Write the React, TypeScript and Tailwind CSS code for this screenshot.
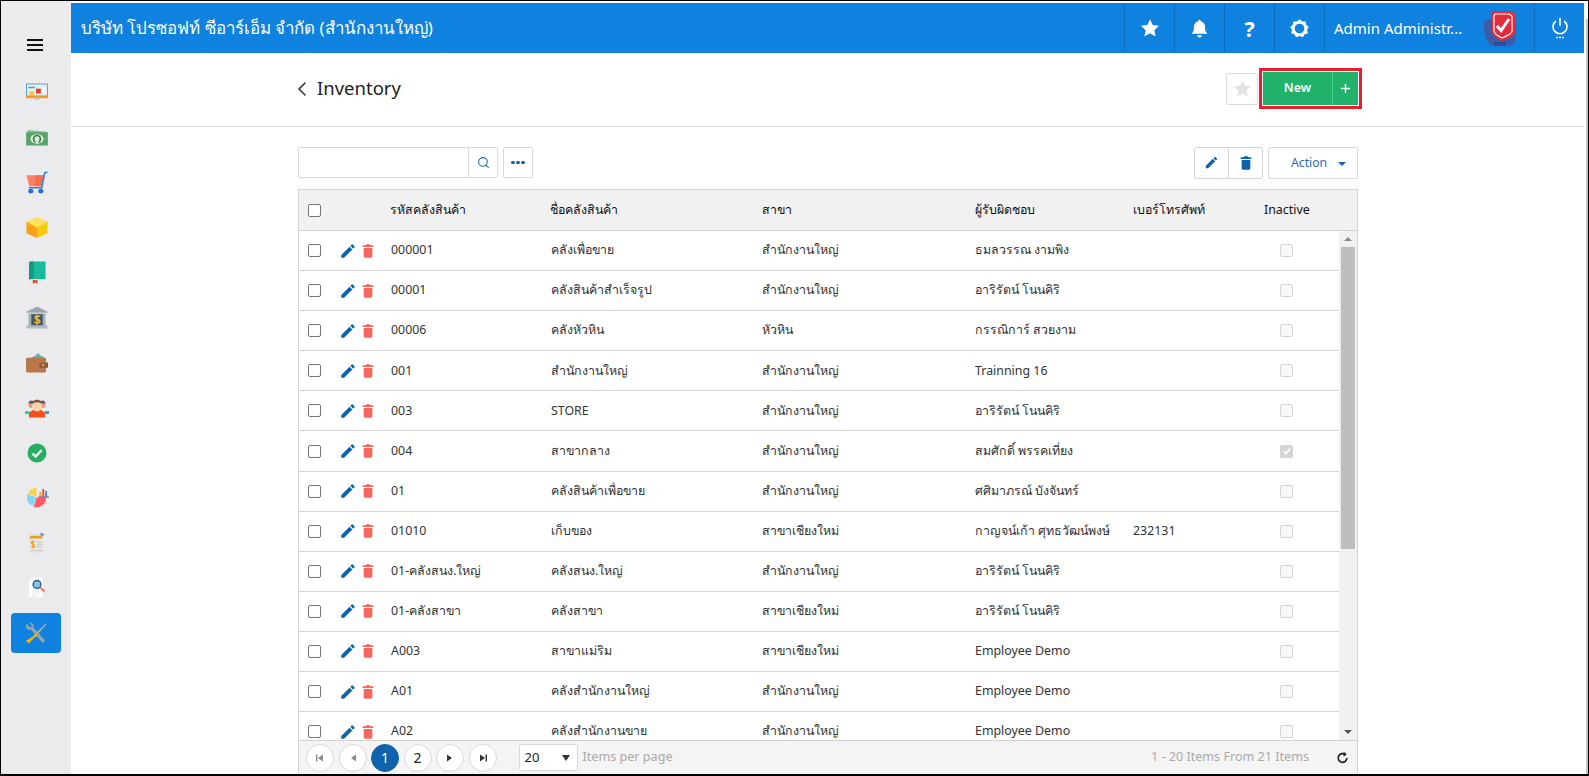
import { ChevronLeft, Search } from "lucide-react";

const FONT = "font-['Noto_Sans','Liberation_Sans',sans-serif]";
const COLS = "grid grid-cols-[42px_50px_160px_211px_213px_158px_131px_1fr] items-center";

type Row = { code: string; name: string; branch: string; owner: string; phone?: string; inactive?: boolean };

const HO = "สำนักงานใหญ่";
const CM = "สาขาเชียงใหม่";
const ARIRAT = "อาริรัตน์ โนนคิริ";

const ROWS: Row[] = [
  { code: "000001", name: "คลังเพื่อขาย", branch: HO, owner: "ธมลวรรณ งามพิง" },
  { code: "00001", name: "คลังสินค้าสำเร็จรูป", branch: HO, owner: ARIRAT },
  { code: "00006", name: "คลังหัวหิน", branch: "หัวหิน", owner: "กรรณิการ์ สวยงาม" },
  { code: "001", name: HO, branch: HO, owner: "Trainning 16" },
  { code: "003", name: "STORE", branch: HO, owner: ARIRAT },
  { code: "004", name: "สาขากลาง", branch: HO, owner: "สมศักดิ์ พรรคเที่ยง", inactive: true },
  { code: "01", name: "คลังสินค้าเพื่อขาย", branch: HO, owner: "ศศิมาภรณ์ บังจันทร์" },
  { code: "01010", name: "เก็บของ", branch: CM, owner: "กาญจน์เก้า ศุทธวัฒน์พงษ์", phone: "232131" },
  { code: "01-คลังสนง.ใหญ่", name: "คลังสนง.ใหญ่", branch: HO, owner: ARIRAT },
  { code: "01-คลังสาขา", name: "คลังสาขา", branch: CM, owner: ARIRAT },
  { code: "A003", name: "สาขาแม่ริม", branch: CM, owner: "Employee Demo" },
  { code: "A01", name: "คลังสำนักงานใหญ่", branch: HO, owner: "Employee Demo" },
  { code: "A02", name: "คลังสำนักงานขาย", branch: HO, owner: "Employee Demo" },
];

function PencilIcon({ className }: { className?: string }) {
  return (
    <svg viewBox="0 0 24 24" fill="currentColor" className={className}>
      <path d="M3 17.25V21h3.75L17.81 9.94l-3.75-3.75L3 17.25zM20.71 7.04a1 1 0 0 0 0-1.41l-2.34-2.34a1 1 0 0 0-1.41 0l-1.83 1.83 3.75 3.75 1.83-1.83z" />
    </svg>
  );
}

function TrashIcon({ className }: { className?: string }) {
  return (
    <svg viewBox="0 0 24 24" fill="currentColor" className={className}>
      <path d="M5.5 7.5h13V20c0 1.1-.9 2-2 2h-9c-1.1 0-2-.9-2-2V7.5zM20 3.5h-4.5l-1-1.5h-5l-1 1.5H4v2.5h16V3.5z" />
    </svg>
  );
}

function StarIcon({ className }: { className?: string }) {
  return (
    <svg viewBox="0 0 24 24" fill="currentColor" className={className}>
      <path d="M12 1.5l3.2 7 7.6.9-5.6 5.2 1.5 7.5L12 18.3l-6.7 3.8 1.5-7.5L1.2 9.4l7.6-.9z" />
    </svg>
  );
}

function CheckBox({ disabled, checked }: { disabled?: boolean; checked?: boolean }) {
  if (disabled) {
    return (
      <span
        className={`flex h-[13px] w-[13px] items-center justify-center rounded-[2px] border border-[#d4d4d4] ${
          checked ? "bg-[#d4d4d4]" : "bg-[#f8f8f8]"
        }`}
      >
        {checked && (
          <svg viewBox="0 0 12 12" className="h-[10px] w-[10px]" fill="none" stroke="#fff" strokeWidth="2">
            <path d="M2 6.5l2.7 2.7L10 3" />
          </svg>
        )}
      </span>
    );
  }
  return <span className="block h-[13px] w-[13px] rounded-[2px] border border-[#767676] bg-white" />;
}

function MonitorIcon() {
  return (
    <svg viewBox="0 0 24 20" className="h-[19px] w-[24px]">
      <rect x="1" y="1" width="22" height="14" fill="#e8eff3" stroke="#5a9bd5" strokeWidth="1" />
      <rect x="0.5" y="13" width="23" height="3" fill="#f59a23" />
      <rect x="9" y="16" width="6" height="1.5" fill="#9fd3e0" />
      <rect x="3" y="4" width="7" height="1.5" fill="#3aa6a6" />
      <rect x="11" y="6" width="5" height="5" fill="#e5392f" />
      <rect x="4" y="9" width="5" height="4" fill="#f5c542" />
      <rect x="17" y="5" width="3" height="5" fill="#ffffff" />
    </svg>
  );
}

function MoneyIcon() {
  return (
    <svg viewBox="0 0 24 18" className="h-[17px] w-[24px]">
      <path d="M2 1l20 2v3H2z" fill="#7cc48b" />
      <rect x="0.5" y="3.5" width="23" height="14" fill="#5aa469" />
      <ellipse cx="12" cy="10.5" rx="7" ry="5" fill="#dcefd9" />
      <circle cx="12" cy="10.5" r="3.6" fill="none" stroke="#3d7a4c" strokeWidth="1.8" />
      <rect x="10.5" y="12.5" width="3" height="3" fill="#dcefd9" />
    </svg>
  );
}

function CartIcon() {
  return (
    <svg viewBox="0 0 24 24" className="h-[23px] w-[24px]">
      <path d="M1 4.5h18L17 16H4z" fill="#ff7f66" />
      <path d="M10 4.5h9L17 16h-7z" fill="#f2704f" />
      <path d="M23 1l-3 1-3 15.5H3.5" fill="none" stroke="#2f7fe0" strokeWidth="1.6" />
      <circle cx="5.5" cy="21" r="2.6" fill="#1f6fd6" />
      <circle cx="16" cy="21" r="2.6" fill="#1f6fd6" />
    </svg>
  );
}

function BoxIcon() {
  return (
    <svg viewBox="0 0 24 24" className="h-[23px] w-[24px]">
      <path d="M12 1l11 5-11 6L1 6z" fill="#ffe44d" />
      <path d="M1 6l11 6v11L1 18z" fill="#f8a116" />
      <path d="M23 6l-11 6v11l11-5z" fill="#f7c911" />
      <path d="M7 3.5l11 5M9 2.7l11 5" stroke="#f3d98a" strokeWidth="1" />
    </svg>
  );
}

function BookIcon() {
  return (
    <svg viewBox="0 0 20 24" className="h-[23px] w-[19px]">
      <path d="M2 0.5h16.5V19H3a2 2 0 0 0-2 2z" fill="#18bc9c" />
      <path d="M1 2a2 2 0 0 1 2-1.5h3V19H3a2 2 0 0 0-2 1.5z" fill="#129a82" />
      <path d="M1 20.5A2 2 0 0 1 3 19h15.5v2H3z" fill="#d4ece6" />
      <path d="M5 20h5v4l-2.5-1.5L5 24z" fill="#e74c3c" />
    </svg>
  );
}

function BankIcon() {
  return (
    <svg viewBox="0 0 24 24" className="h-[23px] w-[24px]">
      <path d="M12 0.5L23 6v1H1V6z" fill="#9aa7ae" />
      <rect x="2.5" y="7" width="19" height="1.6" fill="#c4ccd1" />
      <rect x="4" y="8.5" width="16" height="12" fill="#455a64" />
      <rect x="3" y="8.5" width="3" height="12" fill="#a9b4ba" />
      <rect x="18" y="8.5" width="3" height="12" fill="#a9b4ba" />
      <path
        d="M15 11.2c-.7-.8-4.8-1.4-5 .8-.2 2.5 5.3 1.6 5 4.2-.3 2-4.6 1.7-5.7.5M12 9.5v10"
        fill="none"
        stroke="#f5c12e"
        strokeWidth="1.5"
      />
      <rect x="1" y="20.5" width="22" height="3" fill="#b0bcc2" />
    </svg>
  );
}

function WalletIcon() {
  return (
    <svg viewBox="0 0 24 22" className="h-[21px] w-[24px]">
      <path d="M4 7l6-3 3-3 3 3 3 1 1 3H4z" fill="#68b5a0" />
      <rect x="0.5" y="6" width="21" height="15.5" rx="1.5" fill="#b8784b" />
      <path d="M17 11h6.5v5.5H17a2.7 2.7 0 0 1 0-5.5z" fill="#8f5a36" />
      <circle cx="18.5" cy="13.7" r="1.2" fill="#f2c14e" />
    </svg>
  );
}

function PeopleIcon() {
  return (
    <svg viewBox="0 0 24 20" className="h-[20px] w-[24px]">
      <circle cx="6.5" cy="7" r="3" fill="#dca27a" />
      <circle cx="17.5" cy="7" r="3" fill="#dca27a" />
      <path d="M3.5 5.5a3 3 0 0 1 6 0zM14.5 5.5a3 3 0 0 1 6 0z" fill="#6b5a70" />
      <rect x="0" y="13" width="4" height="3" fill="#1ed6a0" />
      <rect x="20" y="13" width="4" height="3" fill="#2a9df4" />
      <path d="M4 19.5v-5l4-2.5h8l4 2.5v5z" fill="#f0501e" />
      <ellipse cx="12" cy="7.5" rx="5" ry="6" fill="#fbd3ae" />
      <path d="M6.8 6.5C6.5 0 17.5 0 17.2 6.5 15 3.5 9 3.5 6.8 6.5z" fill="#7a5346" />
    </svg>
  );
}

function CheckCircleIcon() {
  return (
    <svg viewBox="0 0 20 20" className="h-[20px] w-[20px]">
      <circle cx="10" cy="10" r="9.5" fill="#27ae60" />
      <path d="M5.5 10.5l3.2 3 6-6.3" fill="none" stroke="#eaf7ef" strokeWidth="2.4" />
    </svg>
  );
}

function PieIcon() {
  return (
    <svg viewBox="0 0 24 22" className="h-[21px] w-[23px]">
      <path d="M11 10L11 1A10 10 0 0 0 1.8 7z" fill="#fbd24d" />
      <path d="M11 11L1.5 7.5A10 10 0 0 0 7 20z" fill="#7fd6f5" />
      <path d="M11 11l-3 9.8A10 10 0 0 0 21 11z" fill="#ff5a66" />
      <rect x="14" y="5" width="2" height="5" fill="#f59b42" />
      <rect x="17" y="2" width="2" height="8" fill="#d9534f" />
      <rect x="20" y="4" width="2" height="6" fill="#5b7fd6" />
      <rect x="13" y="10" width="11" height="1" fill="#33506b" />
    </svg>
  );
}

function BillIcon() {
  return (
    <svg viewBox="0 0 20 24" className="h-[22px] w-[18px]">
      <rect x="0.5" y="1" width="17" height="22.5" fill="#e6e6e6" />
      <rect x="2" y="4" width="14" height="3" fill="#eea024" />
      <path d="M14 0l5 3-5 1.5z" fill="#5b9bd5" />
      <path
        d="M7.5 11c-.5-1-4-1.3-4 .8 0 2.2 4.2 1 4 3.4-.2 1.6-3.2 1.5-4.2.3M5.5 9.5v9"
        fill="none"
        stroke="#eea024"
        strokeWidth="1.3"
      />
      <path d="M10 11h6M10 13.5h6M10 16h6M3 20.5h13" stroke="#c6c6c6" strokeWidth="1" />
    </svg>
  );
}

function SearchDocIcon() {
  return (
    <svg viewBox="0 0 20 24" className="h-[21px] w-[18px]">
      <path d="M3 0.5h13.5V23H1V3z" fill="#ffffff" />
      <path d="M1 3l2-2.5V3z" fill="#c9ced2" />
      <path d="M4 16h9M4 18.5h10M4 21h7" stroke="#dce6ee" strokeWidth="1" />
      <circle cx="10" cy="8.5" r="4.5" fill="#7cc7ee" stroke="#38566e" strokeWidth="1.5" />
      <path d="M13.5 12l5 4.5" stroke="#ef6f6c" strokeWidth="2.4" />
    </svg>
  );
}

function ToolsIcon() {
  return (
    <svg viewBox="0 0 24 24" className="h-[22px] w-[22px]">
      <path d="M23 1L12 12l1.5 2L23.5 2.5z" fill="#a8b0b4" />
      <path
        d="M2 1.8C.6 3.5.7 6 2.3 7.5c1.3 1.2 3 1.4 4.4.9L18.5 22c1.3 1.4 4.2-1 2.9-2.5L9.2 6C9.7 4.5 9.4 3 8.2 1.9 7.2 1 5.8.6 4.6.9L7.5 4 6 6.5 2 1.8z"
        fill="#98a3a8"
      />
      <path d="M9 15.5l2.5-3.5 2.5 2.5-3.5 2.5L4 23.5 1 20.5z" fill="#f7b500" />
    </svg>
  );
}

const NAV = [
  MonitorIcon,
  MoneyIcon,
  CartIcon,
  BoxIcon,
  BookIcon,
  BankIcon,
  WalletIcon,
  PeopleIcon,
  CheckCircleIcon,
  PieIcon,
  BillIcon,
  SearchDocIcon,
];

function Sidebar() {
  return (
    <aside className="flex w-[70px] shrink-0 flex-col items-center bg-[#ebebed] pt-[24px]">
      <div className="flex h-[40px] flex-col items-center justify-center gap-[3px] pr-[2px]">
        <span className="h-[2px] w-[16px] bg-[#111]" />
        <span className="h-[2px] w-[16px] bg-[#111]" />
        <span className="h-[2px] w-[16px] bg-[#111]" />
      </div>
      <div className="mt-[5px] flex w-full flex-col items-center">
        {NAV.map((Icon, i) => (
          <div key={i} className="flex h-[45px] w-full items-center justify-center pl-[2px]">
            <Icon />
          </div>
        ))}
      </div>
      <div className="mt-[3px] flex h-[40px] w-[50px] items-center justify-center rounded-[4px] bg-[#0e82de]">
        <ToolsIcon />
      </div>
    </aside>
  );
}

function HeaderCell({ children }: { children: React.ReactNode }) {
  return <div className="flex h-full w-[50px] items-center justify-center border-l border-[#0a6cbd]">{children}</div>;
}

function TopBar() {
  return (
    <header className="flex h-[50px] shrink-0 items-center bg-[#0e82de] text-white">
      <div className="flex-1 truncate pl-[10px] text-[16.9px]">บริษัท โปรซอฟท์ ซีอาร์เอ็ม จำกัด (สำนักงานใหญ่)</div>
      <HeaderCell>
        <StarIcon className="h-[20px] w-[20px]" />
      </HeaderCell>
      <HeaderCell>
        <svg viewBox="0 0 24 24" fill="currentColor" className="h-[19px] w-[19px]">
          <path d="M12 1a2 2 0 0 1 2 2c3.5 1 5 3.5 5 7 0 5 1.2 6.5 3 8.5H2C3.8 16.5 5 15 5 10c0-3.5 1.5-6 5-7a2 2 0 0 1 2-2zM9 20.5h6a3 3 0 0 1-6 0z" />
        </svg>
      </HeaderCell>
      <HeaderCell>
        <span className="text-[22px] font-bold leading-none">?</span>
      </HeaderCell>
      <HeaderCell>
        <svg viewBox="0 0 24 24" className="h-[21px] w-[21px]">
          <path
            d="M12 1.5l3 2.6 3.9-.2.7 3.9 3 2.5-2 3.4 1 3.7-3.7 1.3-2 3.3-3.9-1.3-3.9 1.3-2-3.3-3.7-1.3 1-3.7-2-3.4 3-2.5.7-3.9 3.9.2z"
            fill="currentColor"
          />
          <circle cx="12" cy="12" r="5.5" fill="#0e82de" />
        </svg>
      </HeaderCell>
      <div className="flex h-full w-[210px] items-center border-l border-[#0a6cbd] pl-[9px]">
        <span className="text-[15px]">Admin Administr...</span>
        <svg viewBox="0 0 34 36" className="ml-[21px] mt-[1px] h-[36px] w-[34px]">
          <path d="M1 10C8 6 22 8 33 14l-1 17-4 4H8C2 29 0 19 1 10z" fill="#3d5ba9" />
          <path d="M9 0h19l4 3v18c0 4-6 6-13 9-5-3-10-5-10-9z" fill="#e52b3a" />
          <path d="M12 3h14l3 2v15c0 3-5 5-10 7-4-2-8-4-8-7V5z" fill="none" stroke="#fff" strokeWidth="1.2" />
          <path d="M14 15l4 4.5L26 8" fill="none" stroke="#fff" strokeWidth="3" />
          <text x="11" y="35" fontSize="5" fill="#1c2f6b">
            SOFT
          </text>
        </svg>
      </div>
      <div className="flex h-full w-[50px] items-center justify-center border-l border-[#0a6cbd]">
        <svg viewBox="0 0 18 24" className="h-[24px] w-[18px]" fill="none" stroke="currentColor" strokeWidth="1.6">
          <path d="M9 2v8M5 5a7 7 0 1 0 8 0" />
          <path d="M5 21.5h2M8 21.5h2M11 21.5h2" strokeWidth="1.5" />
        </svg>
      </div>
    </header>
  );
}

function TitleBar() {
  return (
    <div className="flex h-[74px] shrink-0 items-center border-b border-[#e2e2e2] pb-[2px] pl-[219px] pr-[222px]">
      <ChevronLeft className="h-[24px] w-[24px] text-[#333]" strokeWidth={1.6} />
      <h1 className="ml-[3px] text-[18.5px] leading-none text-[#222]">Inventory</h1>
      <div className="ml-auto flex h-[32px] w-[32px] items-center justify-center rounded-[2px] border border-[#dcdcdc]">
        <StarIcon className="h-[19px] w-[19px] text-[#e3e3e3]" />
      </div>
      <div className="ml-[1px] border-[3px] border-[#ee1c2e] p-[1px]">
        <button className="flex h-[33px] w-[95px] items-center bg-[#20b16a] text-[12.5px] font-semibold text-white">
          <span className="flex-1 text-center">New</span>
          <span className="flex h-full w-[26px] items-center justify-center border-l border-[#3fd08a]">
            <svg viewBox="0 0 12 12" className="h-[11px] w-[11px]" stroke="#fff" strokeWidth="1.6">
              <path d="M6 1v10M1 6h10" />
            </svg>
          </span>
        </button>
      </div>
    </div>
  );
}

function Toolbar() {
  return (
    <div className="flex h-[31px] items-center">
      <div className="flex h-[31px] w-[200px] rounded-[2px] border border-[#d9d9d9]">
        <div className="flex-1" />
        <div className="flex w-[29px] items-center justify-center border-l border-[#d9d9d9]">
          <Search className="h-[13px] w-[13px] text-[#1b6cb3]" strokeWidth={2} />
        </div>
      </div>
      <div className="ml-[5px] flex h-[31px] w-[30px] items-center justify-center rounded-[2px] border border-[#d9d9d9]">
        <span className="flex gap-[1.5px]">
          <i className="h-[3.5px] w-[3.5px] rounded-full bg-[#1b5fa8]" />
          <i className="h-[3.5px] w-[3.5px] rounded-full bg-[#1b5fa8]" />
          <i className="h-[3.5px] w-[3.5px] rounded-full bg-[#1b5fa8]" />
        </span>
      </div>
      <div className="ml-auto flex h-[32px] w-[69px] rounded-[2px] border border-[#d5d5d5]">
        <div className="flex w-[34px] items-center justify-center border-r border-[#d5d5d5]">
          <PencilIcon className="h-[15px] w-[15px] text-[#0f62ac]" />
        </div>
        <div className="flex flex-1 items-center justify-center">
          <TrashIcon className="h-[16px] w-[16px] text-[#0f62ac]" />
        </div>
      </div>
      <div className="ml-[5px] flex h-[32px] w-[90px] items-center rounded-[2px] border border-[#d9d9d9] pl-[22px] pt-[2px] text-[12.2px] text-[#2a6db5]">
        Action
        <span className="ml-[11px] h-0 w-0 border-x-[4px] border-t-[4px] border-x-transparent border-t-[#1b5fa8]" />
      </div>
    </div>
  );
}

function TableHeader() {
  return (
    <div className={`${COLS} h-[41px] shrink-0 border-b border-[#d4d4d4] bg-[#f1f1f1] text-[12.4px] text-[#111]`}>
      <div className="pl-[9px]">
        <CheckBox />
      </div>
      <div />
      <div className="-ml-[1px]">รหัสคลังสินค้า</div>
      <div className="-ml-[1px]">ชื่อคลังสินค้า</div>
      <div>สาขา</div>
      <div>ผู้รับผิดชอบ</div>
      <div>เบอร์โทรศัพท์</div>
      <div>Inactive</div>
    </div>
  );
}

function TableRow({ row }: { row: Row }) {
  return (
    <div className={`${COLS} h-[40.1px] shrink-0 border-b border-[#d4d4d4] pr-[18px] text-[12.4px] text-[#333]`}>
      <div className="pl-[9px]">
        <CheckBox />
      </div>
      <div className="-ml-[2px] flex items-center gap-[3px]">
        <PencilIcon className="h-[18px] w-[18px] text-[#0f62ac]" />
        <TrashIcon className="h-[16px] w-[16px] text-[#f8665c]" />
      </div>
      <div>{row.code}</div>
      <div>{row.name}</div>
      <div>{row.branch}</div>
      <div className="whitespace-nowrap">{row.owner}</div>
      <div>{row.phone}</div>
      <div className="pl-[16px]">
        <CheckBox disabled checked={row.inactive} />
      </div>
    </div>
  );
}

function ScrollBar() {
  return (
    <div className="absolute inset-y-0 right-0 flex w-[18px] flex-col bg-[#f1f1f1]">
      <div className="flex h-[16px] items-center justify-center">
        <span className="h-0 w-0 border-x-[4px] border-b-[4px] border-x-transparent border-b-[#8a8a8a]" />
      </div>
      <div className="mx-[2px] h-[302px] bg-[#bdbdbd]" />
      <div className="flex-1" />
      <div className="flex h-[17px] items-center justify-center">
        <span className="h-0 w-0 border-x-[4px] border-t-[4px] border-x-transparent border-t-[#555]" />
      </div>
    </div>
  );
}

function PageButton({ children, active }: { children: React.ReactNode; active?: boolean }) {
  return (
    <span
      className={`flex h-[28px] w-[28px] items-center justify-center rounded-full border text-[14px] ${
        active ? "border-[#0f62ac] bg-[#0f62ac] text-white" : "border-[#d9d9d9] bg-white text-[#222]"
      }`}
    >
      {children}
    </span>
  );
}

function Arrow({ dir, bar, muted }: { dir: "l" | "r"; bar?: boolean; muted?: boolean }) {
  const fill = muted ? "#8a8a8a" : "#333";
  return (
    <svg viewBox="0 0 10 10" className="h-[10px] w-[10px]" fill={fill}>
      {dir === "l" ? <path d="M8 1.5v7L3 5z" /> : <path d="M2 1.5v7L7 5z" />}
      {bar && (dir === "l" ? <rect x="1" y="1.5" width="1.4" height="7" /> : <rect x="7.6" y="1.5" width="1.4" height="7" />)}
    </svg>
  );
}

function Pager() {
  return (
    <div className="flex h-[34px] shrink-0 items-center border-t border-[#d4d4d4] bg-[#f4f4f4] pl-[7px] pr-[8px] text-[12.6px]">
      <div className="flex gap-[4.5px]">
        <PageButton>
          <Arrow dir="l" bar muted />
        </PageButton>
        <PageButton>
          <Arrow dir="l" muted />
        </PageButton>
        <PageButton active>1</PageButton>
        <PageButton>2</PageButton>
        <PageButton>
          <Arrow dir="r" />
        </PageButton>
        <PageButton>
          <Arrow dir="r" bar />
        </PageButton>
      </div>
      <div className="ml-[22px] flex h-[27px] w-[59px] items-center justify-between rounded-[3px] border border-[#d9d9d9] bg-white pl-[5px] pr-[7px] text-[13px] text-[#222]">
        20
        <span className="h-0 w-0 border-x-[4.5px] border-t-[6px] border-x-transparent border-t-[#333]" />
      </div>
      <span className="ml-[5px] text-[#aaa]">Items per page</span>
      <span className="ml-auto text-[#aaa]">1 - 20 Items From 21 Items</span>
      <svg viewBox="0 0 24 24" className="ml-[27px] h-[13px] w-[13px]" fill="none" stroke="#222" strokeWidth="3.2">
        <path d="M20 13a8 8 0 1 1-4-7" />
        <path d="M14 1.5l6 4.5-6 4.5z" fill="#222" stroke="none" />
      </svg>
    </div>
  );
}

export default function App() {
  return (
    <div className={`${FONT} flex h-screen w-full overflow-hidden border-x border-t border-b-2 border-black bg-white`}>
      <Sidebar />
      <div className="flex min-w-0 flex-1 flex-col pt-[2px]">
        <TopBar />
        <TitleBar />
        <div className="flex min-h-0 flex-1 flex-col pl-[227px] pr-[226px] pt-[20px]">
          <Toolbar />
          <div className="mt-[11px] flex min-h-0 flex-1 flex-col border-x border-t border-[#d4d4d4]">
            <TableHeader />
            <div className="relative min-h-0 flex-1 overflow-hidden">
              {ROWS.map((r) => (
                <TableRow key={r.code} row={r} />
              ))}
              <ScrollBar />
            </div>
            <Pager />
          </div>
        </div>
      </div>
      <div className="w-[4px] shrink-0 pl-[2px] pt-[18px]">
        <div className="h-full bg-[#c4c4c4]" />
      </div>
    </div>
  );
}
